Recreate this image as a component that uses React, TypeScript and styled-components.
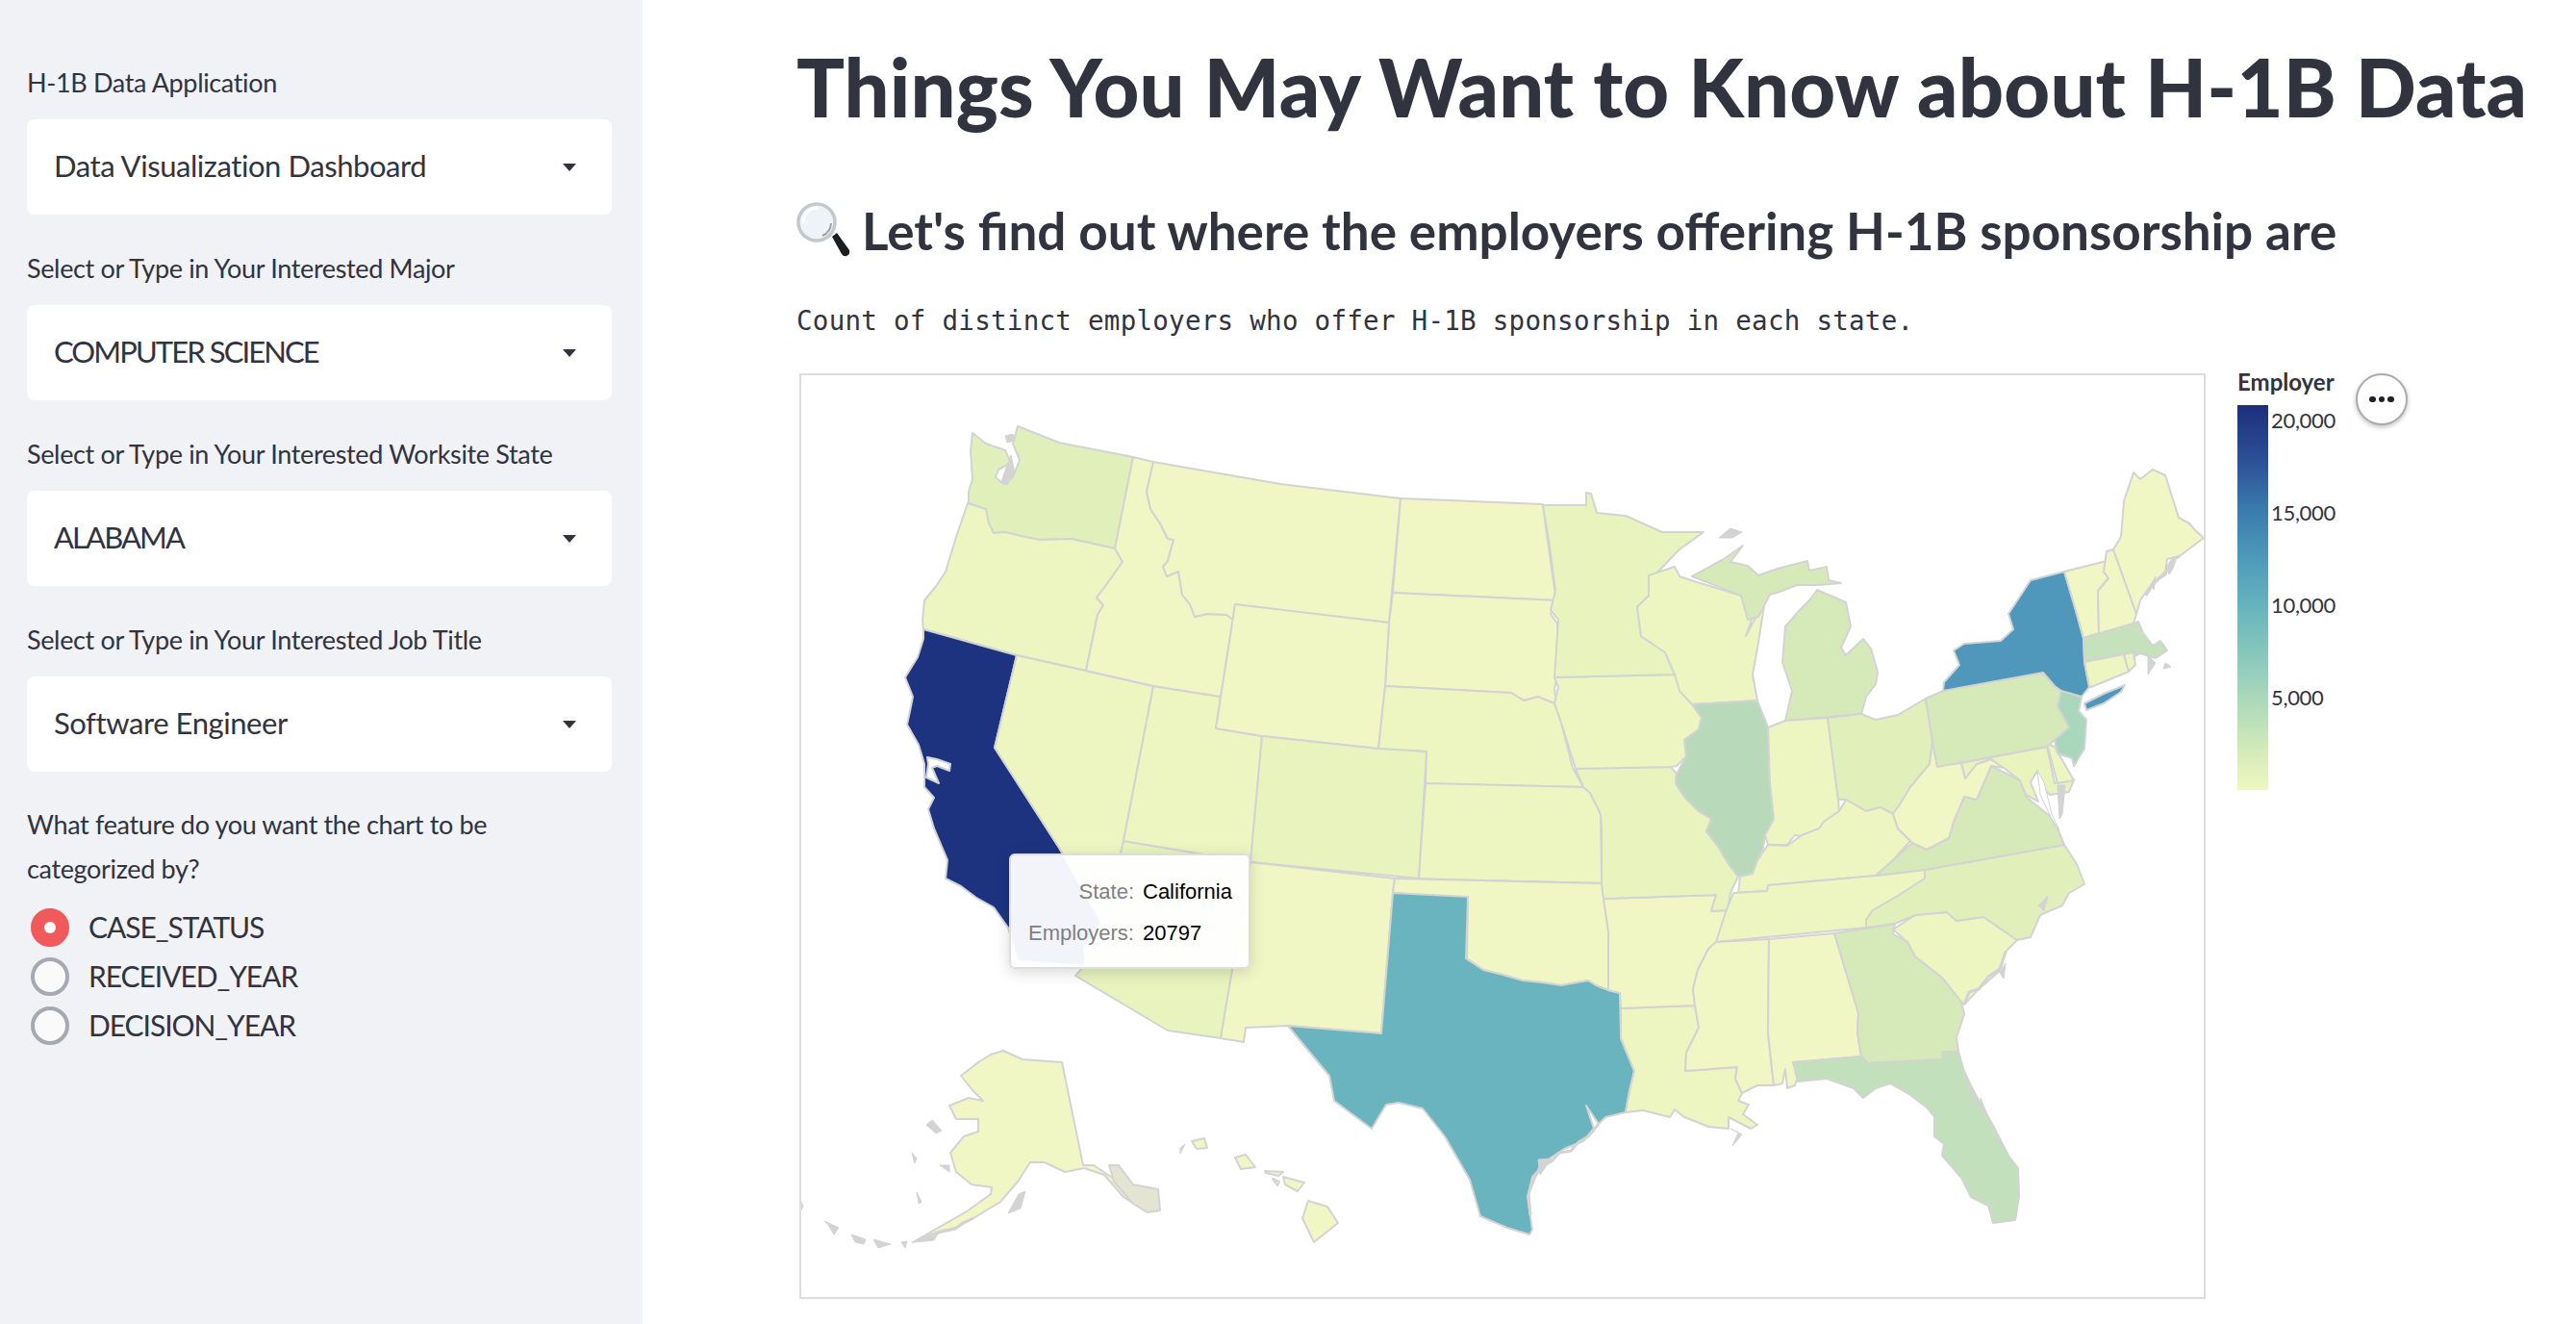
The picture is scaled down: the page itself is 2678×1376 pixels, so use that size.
import styled, { createGlobalStyle } from "styled-components";

interface StateShape {
  name: string;
  fill: string;
  points: string;
}

const GlobalStyle = createGlobalStyle`
  html, body {
    margin: 0;
    padding: 0;
    background: #ffffff;
  }
  body {
    width: 2678px;
    height: 1376px;
    overflow: hidden;
    font-family: "Lato", "Noto Sans", sans-serif;
    color: #31333f;
  }
`;

const Page = styled.div`
  display: flex;
  width: 2678px;
  height: 1376px;
`;

const Sidebar = styled.aside`
  flex: 0 0 668px;
  box-sizing: border-box;
  padding: 65px 32px 0 28px;
  background: #f0f2f6;
`;

const Field = styled.div`
  margin-bottom: 35px;
`;

const FieldLabel = styled.div`
  height: 45px;
  margin-bottom: 14px;
  font-size: 27px;
  letter-spacing: -0.35px;
  line-height: 42px;
  white-space: nowrap;
`;

const Select = styled.div<{ $caps?: boolean }>`
  display: flex;
  align-items: center;
  justify-content: space-between;
  height: 99px;
  box-sizing: border-box;
  padding: 0 37px 3px 28px;
  border-radius: 8px;
  background: #ffffff;
  font-size: 31px;
  letter-spacing: ${({ $caps }) => ($caps ? "-1.9px" : "-0.43px")};
`;

const Caret = styled.span`
  width: 0;
  height: 0;
  margin-top: 3px;
  border-left: 7.5px solid transparent;
  border-right: 7.5px solid transparent;
  border-top: 8px solid #31333f;
`;

const RadioGroup = styled.div`
  margin-top: -3px;
`;

const RadioTitle = styled.div`
  margin-bottom: 12px;
  width: 560px;
  font-size: 27px;
  letter-spacing: -0.35px;
  line-height: 46px;
`;

const RadioRow = styled.div`
  display: flex;
  align-items: center;
  height: 51px;
  padding-left: 4px;
  font-size: 30px;
  letter-spacing: -1.05px;
`;

const RadioText = styled.span`
  padding-bottom: 1px;
`;

const RadioMark = styled.span<{ $on?: boolean }>`
  display: flex;
  align-items: center;
  justify-content: center;
  width: 40px;
  height: 40px;
  box-sizing: border-box;
  margin-right: 20px;
  border-radius: 50%;
  border: 4px solid ${({ $on }) => ($on ? "#f05a5a" : "#a6a9b3")};
  background: ${({ $on }) => ($on ? "#f05a5a" : "#fafafb")};

  &::after {
    content: "";
    display: ${({ $on }) => ($on ? "block" : "none")};
    width: 12px;
    height: 12px;
    border-radius: 50%;
    background: #ffffff;
  }
`;

const Main = styled.main`
  flex: 1;
  min-width: 0;
  padding: 30px 0 0 160px;
`;

const Title = styled.h1`
  margin: 0 0 49px;
  font-size: 83px;
  line-height: 120px;
  font-weight: 900;
  letter-spacing: 0.15px;
  white-space: nowrap;
`;

const Subtitle = styled.h2`
  display: flex;
  align-items: center;
  gap: 10px;
  height: 80px;
  margin: 0 0 32px;
  font-size: 53px;
  font-weight: 700;
  white-space: nowrap;
`;

const MonoLine = styled.div`
  margin-bottom: 33px;
  font-family: "DejaVu Sans Mono", "Liberation Mono", monospace;
  font-size: 27.5px;
  letter-spacing: 0.01em;
  line-height: 44px;
  white-space: nowrap;
`;

const ChartRow = styled.div`
  position: relative;
  display: flex;
  margin-left: 3px;
`;

const MapFrame = styled.svg`
  display: block;
  width: 1462px;
  height: 962px;
  box-sizing: border-box;
  border: 2px solid #dddddd;
  background: #ffffff;
`;

const Legend = styled.div`
  margin-left: 33px;
`;

const LegendTitle = styled.div`
  height: 33px;
  font-size: 24px;
  line-height: 18px;
  font-weight: 700;
  white-space: nowrap;
`;

const LegendBody = styled.div`
  display: flex;
  gap: 3px;
`;

const LegendBar = styled.div`
  width: 32px;
  height: 400px;
  background: linear-gradient(
    to bottom,
    #1d2f7d 0%,
    #2b4f96 14%,
    #3b7dae 28%,
    #51a0bb 42%,
    #6ab7bd 54%,
    #a3d5bb 74%,
    #d4ebb8 90%,
    #edf7c1 100%
  );
`;

const LegendTick = styled.div`
  height: 32px;
  margin-bottom: 64px;
  font-size: 22px;
  letter-spacing: -0.3px;
  line-height: 32px;
`;

const MoreButton = styled.div`
  position: absolute;
  left: 1618px;
  top: 0;
  display: flex;
  align-items: center;
  justify-content: center;
  gap: 3px;
  width: 54px;
  height: 54px;
  box-sizing: border-box;
  border: 2px solid #aaaaaa;
  border-radius: 50%;
  background: #ffffff;
  box-shadow: 0 2px 5px rgba(0, 0, 0, 0.25);
`;

const MoreDot = styled.span`
  width: 6.5px;
  height: 6.5px;
  border-radius: 50%;
  background: #1f2128;
`;

const Tooltip = styled.div`
  position: absolute;
  left: 218px;
  top: 499px;
  box-sizing: border-box;
  width: 251px;
  height: 120px;
  padding: 16px 17px;
  border: 2px solid #dddddd;
  border-radius: 6px;
  background: rgba(255, 255, 255, 0.95);
  box-shadow: 0 4px 16px rgba(0, 0, 0, 0.15);
  font-family: "Liberation Sans", Arial, sans-serif;
  font-size: 22px;
`;

const TooltipRow = styled.div`
  display: grid;
  grid-template-columns: 111px auto;
  column-gap: 9px;
  height: 43px;
  line-height: 43px;
`;

const TooltipKey = styled.span`
  text-align: right;
  color: #808080;
`;

const TooltipValue = styled.span`
  color: #000000;
`;

const C = {
  ca: "#1d3380",
  ny: "#4f98bc",
  tx: "#69b4bf",
  il: "#b8dabb",
  nj: "#a9d7bc",
  ma: "#c5e2bc",
  fl: "#c2e0bb",
  a: "#d6eab9",
  b: "#e1f0bb",
  c: "#e8f3be",
  d: "#edf5c1",
  e: "#f1f7c4",
};

const states: StateShape[] = [
  { name: "WA", fill: C.b, points: "1057,442 1100,459 1177,474 1158,569 1113,559 1080,560 1060,556 1044,552 1032,553 1027,543 1024,528 1006,522 1006,510 1010,497 1008,467 1010,449 1024,460 1044,467 1050,480 1037,487 1034,495 1042,502 1052,495 1059,477 1052,460" },
  { name: "OR", fill: C.d, points: "1005,522 1024,528 1027,543 1032,553 1044,552 1060,556 1080,560 1113,559 1158,569 1166,583 1149,607 1139,620 1146,628 1140,638 1128,696 1056,680 959,653 958,643 960,623 973,607 982,593 993,557" },
  { name: "CA", fill: C.ca, points: "959,653 1056,680 1033,776 1100,880 1144,957 1126,985 1129,1003 1057,998 1047,963 1032,942 1014,932 998,920 982,912 984,893 970,860 964,840 970,828 960,817 960,793 954,773 942,752 945,738 948,723 940,703 953,682 959,663" },
  { name: "NV", fill: C.d, points: "1056,680 1198,712 1167,873 1163,890 1156,905 1150,930 1144,957 1100,880 1033,776" },
  { name: "AZ", fill: C.c, points: "1167,873 1299,895 1268,1078 1213,1070 1117,1013 1126,1003 1129,985 1144,957 1150,930 1156,905 1163,890" },
  { name: "UT", fill: C.d, points: "1198,712 1268,723 1263,756 1311,764 1299,895 1167,873" },
  { name: "ID", fill: C.e, points: "1177,474 1198,479 1191,510 1195,528 1205,543 1213,559 1219,560 1213,582 1208,588 1212,598 1224,593 1228,617 1236,627 1241,640 1254,637 1274,638 1281,643 1268,723 1198,712 1128,696 1140,638 1146,628 1139,620 1149,607 1166,583 1158,569" },
  { name: "MT", fill: C.e, points: "1198,479 1330,502 1455,517 1443,646 1356,637 1283,627 1281,643 1274,638 1254,637 1241,640 1236,627 1228,617 1224,593 1212,598 1208,588 1213,582 1219,560 1213,559 1205,543 1195,528 1191,510" },
  { name: "ND", fill: C.e, points: "1455,517 1603,523 1606,547 1613,597 1617,623 1447,615" },
  { name: "SD", fill: C.e, points: "1447,615 1617,623 1611,637 1618,647 1618,700 1615,715 1618,737 1598,723 1583,727 1570,719 1439,712 1443,646" },
  { name: "WY", fill: C.e, points: "1283,627 1443,646 1439,712 1432,777 1311,764 1263,756" },
  { name: "NE", fill: C.d, points: "1439,712 1570,719 1583,727 1598,723 1615,730 1622,750 1634,797 1645,817 1500,814 1481,813 1482,780 1432,777" },
  { name: "CO", fill: C.c, points: "1311,764 1432,777 1482,780 1474,912 1299,895" },
  { name: "NM", fill: C.e, points: "1299,895 1449,912 1447,927 1435,1073 1338,1065 1294,1067 1292,1082 1268,1078" },
  { name: "KS", fill: C.d, points: "1481,813 1645,817 1652,823 1663,845 1664,917 1500,913 1474,912" },
  { name: "OK", fill: C.e, points: "1449,912 1664,917 1671,967 1671,1028 1658,1023 1650,1018 1622,1023 1602,1020 1582,1018 1561,1012 1541,1007 1524,995 1525,932 1447,927" },
  { name: "TX", fill: C.tx, points: "1447,927 1525,931 1523,995 1541,1007 1561,1012 1582,1018 1602,1020 1622,1023 1650,1018 1658,1023 1671,1028 1683,1031 1684,1078 1698,1112 1693,1133 1689,1155 1668,1160 1661,1167 1648,1148 1656,1172 1645,1185 1625,1193 1610,1203 1592,1222 1587,1243 1592,1277 1589,1282 1566,1275 1538,1263 1527,1225 1501,1180 1478,1151 1453,1145 1440,1147 1425,1172 1386,1143 1381,1117 1356,1087 1338,1065 1435,1073" },
  { name: "LA", fill: C.d, points: "1684,1047 1761,1044 1765,1067 1752,1093 1751,1112 1805,1108 1803,1120 1810,1135 1806,1143 1817,1147 1811,1157 1826,1168 1819,1172 1796,1160 1796,1172 1775,1170 1763,1165 1750,1160 1740,1152 1735,1160 1707,1153 1689,1155 1693,1133 1698,1112 1684,1078" },
  { name: "AR", fill: C.e, points: "1666,933 1783,929 1778,946 1795,945 1786,977 1775,985 1764,1007 1759,1027 1761,1044 1684,1047 1683,1031 1671,1028 1671,967" },
  { name: "MO", fill: C.c, points: "1637,798 1736,796 1742,803 1741,813 1750,827 1765,842 1778,850 1773,863 1786,880 1796,897 1806,910 1798,927 1795,945 1778,946 1783,929 1666,933 1664,917 1664,860 1663,845 1652,823 1645,817" },
  { name: "IA", fill: C.d, points: "1615,703 1741,700 1745,717 1758,730 1768,745 1765,757 1750,768 1752,785 1742,795 1736,796 1637,798 1622,750 1615,730 1619,713" },
  { name: "MN", fill: C.c, points: "1603,524 1648,524 1648,511 1653,512 1659,532 1689,535 1707,543 1727,552 1770,552 1745,570 1719,597 1713,598 1713,618 1701,630 1705,660 1730,677 1740,700 1615,703 1619,643 1611,633 1616,613 1610,567" },
  { name: "WI", fill: C.d, points: "1713,597 1740,588 1745,598 1760,603 1809,618 1821,640 1814,660 1834,622 1826,673 1821,700 1826,727 1758,731 1745,717 1740,700 1730,677 1705,660 1701,630 1713,618" },
  { name: "MI", fill: C.a, points: "1758,598 1791,580 1811,566 1798,583 1816,587 1827,597 1847,590 1878,582 1880,592 1898,588 1900,602 1913,605 1888,607 1867,607 1852,613 1839,617 1827,640 1816,643 1809,618" },
  { name: "MI2", fill: C.a, points: "1888,612 1918,625 1923,650 1913,672 1918,680 1936,663 1944,673 1951,697 1949,710 1939,723 1934,741 1855,748 1862,717 1852,687 1855,650 1870,633 1880,623" },
  { name: "IL", fill: C.il, points: "1758,731 1826,727 1837,755 1839,813 1843,850 1834,867 1832,880 1826,893 1821,907 1806,910 1796,897 1786,880 1773,863 1778,850 1765,842 1750,827 1741,813 1742,803 1752,785 1750,768 1765,757 1768,745" },
  { name: "IN", fill: C.d, points: "1837,755 1855,748 1899,745 1910,830 1911,842 1895,853 1883,870 1865,867 1857,877 1837,877 1834,867 1843,850 1839,813" },
  { name: "OH", fill: C.b, points: "1899,745 1934,741 1949,747 1972,742 2001,725 2008,770 2005,793 1985,817 1974,835 1967,845 1954,838 1939,842 1918,830 1910,830" },
  { name: "KY", fill: C.d, points: "1826,893 1837,877 1857,878 1872,867 1890,860 1895,853 1911,842 1918,830 1939,842 1954,838 1967,845 1972,860 1985,873 1967,893 1949,909 1837,919 1836,925 1806,927 1808,910 1821,907" },
  { name: "TN", fill: C.d, points: "1801,927 1836,925 1837,919 1949,909 2000,903 2000,912 1972,930 1946,945 1939,955 1939,963 1783,978 1793,947" },
  { name: "MS", fill: C.e, points: "1783,978 1838,975 1837,1073 1843,1127 1826,1127 1810,1135 1803,1120 1805,1108 1751,1112 1752,1093 1765,1067 1761,1044 1759,1027 1764,1007 1775,985" },
  { name: "AL", fill: C.e, points: "1838,975 1906,969 1931,1052 1930,1073 1934,1097 1863,1103 1868,1117 1865,1127 1857,1130 1855,1110 1852,1125 1843,1127 1837,1073" },
  { name: "GA", fill: C.a, points: "1906,969 1969,959 1967,970 1982,978 1990,993 2018,1015 2038,1040 2041,1053 2033,1077 2035,1092 2019,1092 2018,1100 1941,1104 1934,1097 1930,1073 1931,1052" },
  { name: "FL", fill: C.fl, points: "1863,1103 1934,1097 1941,1104 2018,1100 2019,1092 2035,1092 2041,1113 2053,1137 2069,1165 2087,1200 2097,1213 2098,1243 2094,1267 2071,1270 2066,1252 2048,1243 2038,1223 2018,1200 2020,1188 2010,1180 2010,1160 2002,1150 1985,1137 1964,1125 1949,1130 1936,1140 1926,1130 1898,1120 1868,1123" },
  { name: "SC", fill: C.d, points: "1967,965 1990,950 2023,947 2033,956 2061,952 2096,976 2084,988 2079,1007 2056,1027 2041,1043 2038,1040 2018,1015 1990,993 1982,978" },
  { name: "NC", fill: C.b, points: "2000,903 2145,877 2158,897 2166,918 2150,927 2143,940 2120,950 2110,973 2096,976 2061,952 2033,956 2023,947 1990,950 1969,959 1939,963 1939,955 1946,945 1972,930 2000,912" },
  { name: "VA", fill: C.a, points: "1949,909 2000,903 2145,877 2138,860 2130,847 2105,827 2099,810 2069,795 2054,830 2041,827 2030,853 2025,870 2002,882 1987,875 1967,893" },
  { name: "WV", fill: C.e, points: "2008,770 2013,795 2038,792 2042,808 2054,793 2069,788 2082,797 2069,795 2054,830 2041,827 2030,853 2025,870 2002,882 1987,875 1972,860 1967,845 1974,835 1985,817 2005,793" },
  { name: "MD", fill: C.c, points: "2038,792 2127,775 2135,813 2155,809 2150,822 2130,825 2120,815 2117,800 2110,812 2118,832 2105,825 2099,810 2082,797 2069,788 2054,793 2042,808" },
  { name: "DE", fill: C.d, points: "2127,772 2135,775 2155,810 2138,813" },
  { name: "PA", fill: C.a, points: "2001,725 2019,717 2123,698 2135,712 2142,717 2138,733 2150,755 2135,768 2127,775 2013,796 2008,770" },
  { name: "NJ", fill: C.nj, points: "2142,717 2163,723 2160,738 2168,747 2166,777 2155,795 2153,787 2138,782 2135,768 2150,755 2138,733" },
  { name: "NY", fill: C.ny, points: "2019,717 2020,708 2036,690 2030,675 2041,668 2079,665 2092,653 2087,637 2110,602 2145,593 2156,630 2165,663 2166,687 2171,713 2163,723 2142,717 2135,712 2123,698" },
  { name: "LI", fill: C.ny, points: "2166,730 2186,720 2208,711 2204,718 2186,730 2168,737" },
  { name: "VT", fill: C.e, points: "2145,593 2189,582 2186,593 2191,600 2180,613 2181,657 2165,662 2156,630" },
  { name: "NH", fill: C.e, points: "2189,572 2196,570 2220,637 2217,647 2181,658 2180,613 2191,600 2186,593" },
  { name: "ME", fill: C.e, points: "2196,570 2204,557 2207,520 2217,490 2224,497 2237,487 2250,493 2264,537 2275,543 2281,550 2290,558 2265,577 2252,580 2250,593 2235,607 2224,623 2220,637" },
  { name: "MA", fill: C.ma, points: "2165,662 2217,647 2222,645 2227,657 2237,670 2245,665 2252,675 2240,683 2224,678 2217,682 2207,678 2166,687" },
  { name: "CT", fill: C.d, points: "2166,687 2207,679 2212,697 2173,713 2171,713" },
  { name: "RI", fill: C.d, points: "2207,679 2217,677 2219,690 2212,697" },
  { name: "AK", fill: C.e, points: "1042,1091 1062,1100 1103,1103 1125,1210 1136,1210 1154,1222 1177,1237 1203,1243 1203,1252 1190,1258 1167,1243 1147,1220 1126,1213 1106,1217 1085,1207 1070,1207 1057,1227 1039,1248 1011,1265 993,1275 978,1278 948,1290 1004,1258 1029,1240 1030,1233 1009,1230 993,1217 987,1197 1001,1180 1016,1175 1016,1162 993,1162 986,1148 1006,1140 1021,1143 1010,1132 998,1117 1016,1103 1029,1095" },
  { name: "AK2", fill: "#e3e5d2", points: "1152,1210 1162,1210 1177,1230 1203,1235 1205,1257 1192,1259 1177,1250 1157,1227" },
  { name: "HI1", fill: C.e, points: "1359,1247 1379,1253 1390,1270 1365,1290 1353,1265" },
  { name: "HI2", fill: C.e, points: "1333,1222 1355,1228 1348,1237 1335,1230" },
  { name: "HI3", fill: C.e, points: "1314,1216 1333,1217 1328,1221 1315,1218" },
  { name: "HI4", fill: C.e, points: "1283,1202 1294,1199 1304,1212 1289,1214" },
  { name: "HI5", fill: C.e, points: "1238,1185 1251,1182 1254,1192 1243,1193" },
  { name: "HI6", fill: C.e, points: "1322,1224 1329,1227 1327,1231" },
];

// islands and sounds that come out as plain border colour at this scale
const specks = [
  "1044,488 1050,472 1054,490 1046,503 1040,500",
  "1044,452 1052,450 1054,457 1046,459",
  "1226,1192 1231,1188 1226,1198",
  "962,1168 968,1163 978,1174 972,1177",
  "976,1210 986,1210 986,1217",
  "947,1197 952,1203 950,1208",
  "952,1238 957,1248 954,1250",
  "830,1243 834,1253 831,1258",
  "856,1268 871,1275 866,1282 860,1272",
  "884,1282 899,1287 897,1292 888,1290",
  "907,1287 925,1292 912,1296",
  "936,1290 942,1289 940,1296",
  "950,1290 976,1278 970,1288",
  "1047,1260 1058,1240 1065,1237 1060,1255",
  "2078,1010 2084,1000 2082,1016",
  "2118,940 2128,930 2124,946",
  "1798,1172 1810,1178 1800,1190 1806,1176",
  "1598,1204 1612,1203 1600,1220",
  "2232,680 2240,688 2232,700",
  "2250,688 2256,692 2248,694",
  "1810,552 1800,558 1786,558 1798,548",
  "2252,588 2262,578 2258,590 2254,596",
  "2236,605 2240,598 2238,612",
  "2058,1140 2066,1160 2058,1150",
  "2138,815 2146,815 2143,845 2140,850",
];

// broken-up stretches of coast drawn a little heavier than the state lines
const fringes = [
  "1661,1167 1650,1180 1640,1186 1632,1195 1620,1197 1612,1206 1600,1212 1594,1224 1588,1240 1590,1262",
  "2265,577 2258,580 2254,586 2250,596 2244,600 2236,608 2230,618",
  "2041,1043 2046,1030 2056,1027 2066,1014 2078,1006 2084,988",
  "1011,1265 1000,1270 992,1276 978,1279 962,1284",
  "2041,1113 2048,1130 2052,1150",
];

const Magnifier = () => (
  <svg width="58" height="58" viewBox="0 0 58 58">
    <path d="M37 36 L42 32 L55 50 Q56 55 52 56 Q49 57 47 54 Z" fill="#1c1d20" />
    <circle cx="21" cy="21" r="19" fill="#eef3f8" stroke="#c3c8cd" strokeWidth="3.5" />
    <path d="M7 22 A15 15 0 0 1 22 6" fill="none" stroke="#ffffff" strokeWidth="3" />
    <path d="M36 22 A15 15 0 0 1 27 35" fill="none" stroke="#9aa2aa" strokeWidth="2" />
  </svg>
);

const USMap = () => (
  <MapFrame viewBox="832 389 1458 958">
    <g stroke="#d3d3d3" strokeWidth="2" strokeLinejoin="round">
      {states.map((s) => (
        <polygon key={s.name} points={s.points} fill={s.fill} />
      ))}
      <polygon points="963,786 973,788 987,793 986,800 973,795 968,797 975,813 962,807 964,793" fill="#ffffff" />
      <polygon points="2117,800 2124,812 2132,845 2140,862 2132,850 2120,825" fill="#ffffff" strokeWidth="1" />
      {specks.map((p) => (
        <polygon key={p} points={p} fill="#d3d3d3" strokeWidth="1" />
      ))}
      {fringes.map((p) => (
        <polyline key={p} points={p} fill="none" strokeWidth="3" />
      ))}
    </g>
  </MapFrame>
);

const selects = [
  { label: "H-1B Data Application", value: "Data Visualization Dashboard" },
  { label: "Select or Type in Your Interested Major", value: "COMPUTER SCIENCE", caps: true },
  { label: "Select or Type in Your Interested Worksite State", value: "ALABAMA", caps: true },
  { label: "Select or Type in Your Interested Job Title", value: "Software Engineer" },
];

const radios = ["CASE_STATUS", "RECEIVED_YEAR", "DECISION_YEAR"];

const App = () => {
  return (
    <Page>
      <GlobalStyle />
      <Sidebar>
        {selects.map((f) => (
          <Field key={f.label}>
            <FieldLabel>{f.label}</FieldLabel>
            <Select $caps={f.caps}>
              {f.value}
              <Caret />
            </Select>
          </Field>
        ))}
        <RadioGroup>
          <RadioTitle>What feature do you want the chart to be categorized by?</RadioTitle>
          {radios.map((r, i) => (
            <RadioRow key={r}>
              <RadioMark $on={i === 0} />
              <RadioText>{r}</RadioText>
            </RadioRow>
          ))}
        </RadioGroup>
      </Sidebar>
      <Main>
        <Title>Things You May Want to Know about H-1B Data</Title>
        <Subtitle>
          <Magnifier />
          Let's find out where the employers offering H-1B sponsorship are
        </Subtitle>
        <MonoLine>Count of distinct employers who offer H-1B sponsorship in each state.</MonoLine>
        <ChartRow>
          <USMap />
          <Legend>
            <LegendTitle>Employer</LegendTitle>
            <LegendBody>
              <LegendBar />
              <div>
                <LegendTick>20,000</LegendTick>
                <LegendTick>15,000</LegendTick>
                <LegendTick>10,000</LegendTick>
                <LegendTick>5,000</LegendTick>
              </div>
            </LegendBody>
          </Legend>
          <MoreButton>
            <MoreDot />
            <MoreDot />
            <MoreDot />
          </MoreButton>
          <Tooltip>
            <TooltipRow>
              <TooltipKey>State:</TooltipKey>
              <TooltipValue>California</TooltipValue>
            </TooltipRow>
            <TooltipRow>
              <TooltipKey>Employers:</TooltipKey>
              <TooltipValue>20797</TooltipValue>
            </TooltipRow>
          </Tooltip>
        </ChartRow>
      </Main>
    </Page>
  );
};

export default App;
